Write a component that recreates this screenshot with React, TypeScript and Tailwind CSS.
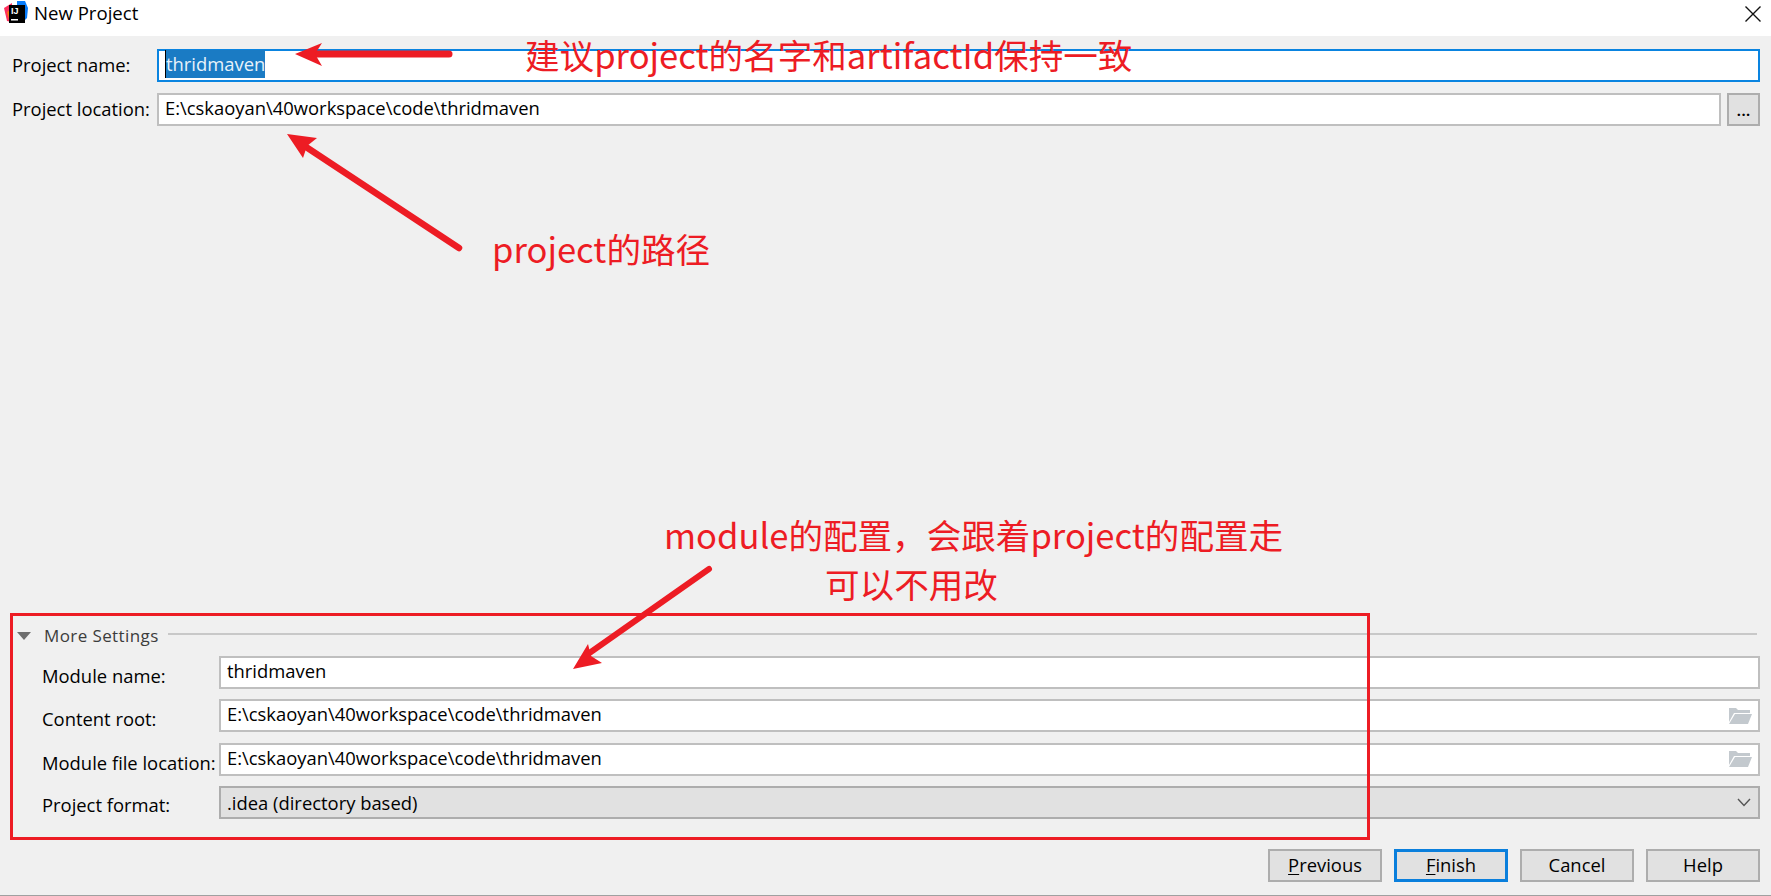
import type { ReactNode } from "react";

const uiFont = "font-['Open_Sans','Noto_Sans',sans-serif]";
const noteFont = "font-['Noto_Sans_CJK_SC',sans-serif]";

const path = "E:\\cskaoyan\\40workspace\\code\\thridmaven";

function IdeaLogo() {
  return (
    <svg width="26" height="26" viewBox="0 0 26 26" className="shrink-0">
      <path d="M1 8 L9 3 L9 22 L4 21 Z" fill="#fe315d" />
      <path d="M14 1 L22 1 L25 8 L24 18 L20 22 L14 22 Z" fill="#087cfa" />
      <path d="M4 12 L9 9 L9 20 L6 19 Z" fill="#f97a12" />
      <rect x="6" y="5" width="16" height="18" fill="#000" />
      <text x="8" y="14" fontSize="9" fontWeight="700" fill="#fff" fontFamily="Liberation Sans">
        IJ
      </text>
      <rect x="8" y="19" width="7" height="1.5" fill="#fff" />
    </svg>
  );
}

function FolderIcon() {
  return (
    <svg width="24" height="18" viewBox="0 0 24 18" className="mb-[-3px] shrink-0">
      <path d="M1 1 H8 L10 3 H22 V6 H6 L1 15 Z" fill="#c3c9ce" />
      <path d="M7 7 H24 L20 17 H1 Z" fill="#c3c9ce" />
    </svg>
  );
}

function TextBox({ children, focused, className = "" }: { children: ReactNode; focused?: boolean; className?: string }) {
  return (
    <div
      className={`flex h-[33px] items-center border-2 bg-white pb-[3px] pl-[6px] pr-[6px] text-[18.4px] text-black ${
        focused ? "border-[#0a84e0]" : "border-[#bfbfbf]"
      } ${className}`}
    >
      {children}
    </div>
  );
}

function Button({ children, focused }: { children: ReactNode; focused?: boolean }) {
  return (
    <button
      type="button"
      className={`flex h-[33px] w-[114px] items-center justify-center bg-[#e1e1e1] pb-[2px] text-[18.4px] text-black ${
        focused ? "border-[3px] border-[#0a7fdc]" : "border-2 border-[#adadad]"
      }`}
    >
      {children}
    </button>
  );
}

function SettingRow({ label, leading, children }: { label: string; leading: string; children: ReactNode }) {
  return (
    <div className="flex h-[33px]">
      <span className={`h-[33px] w-[219px] shrink-0 whitespace-nowrap pl-[42px] text-[18.4px] text-black ${leading}`}>
        {label}
      </span>
      <div className="min-w-0 flex-1">{children}</div>
    </div>
  );
}

function Annotations() {
  return (
    <>
      <div className="pointer-events-none absolute left-[10px] top-[613px] h-[227px] w-[1360px] border-[3px] border-[#ed1c24]" />
      <svg width="1771" height="896" className="pointer-events-none absolute left-0 top-0">
        <g stroke="#ed1c24" strokeLinecap="round" fill="none">
          <path d="M312 54 L449 54" strokeWidth="7" />
          <path d="M300 143 L459 248" strokeWidth="6.5" />
          <path d="M588 654 L709 569" strokeWidth="6" />
        </g>
        <g fill="#ed1c24">
          <path d="M295 54 L322 43 L315 54 L322 66 Z" />
          <path d="M287 134 L317 138 L307 146 L303 158 Z" />
          <path d="M573 669 L588 644 L591 656 L602 663 Z" />
        </g>
      </svg>
      <div className={`${noteFont} pointer-events-none absolute inset-0 text-[34.6px] leading-[44px] text-[#ed1c24]`}>
        <span className="absolute left-[525px] top-[32px] whitespace-nowrap">建议project的名字和artifactId保持一致</span>
        <span className="absolute left-[492px] top-[226px] whitespace-nowrap">project的路径</span>
        <span className="absolute left-[664px] top-[512px] whitespace-nowrap">module的配置，会跟着project的配置走</span>
        <span className="absolute left-[825px] top-[561px] whitespace-nowrap">可以不用改</span>
      </div>
    </>
  );
}

export default function App() {
  return (
    <div className={`${uiFont} relative flex h-[896px] w-[1771px] flex-col overflow-hidden border-b border-[#a0a0a0] bg-[#f0f0f0]`}>
      <header className="flex h-9 items-start justify-between bg-white pl-[3px] pr-[9px]">
        <div className="flex items-center gap-[5px]">
          <IdeaLogo />
          <span className="text-[18.6px] leading-[24px] text-black">New Project</span>
        </div>
        <svg width="18" height="18" viewBox="0 0 18 18" className="mt-[5px]">
          <path d="M1.5 1.5 L16.5 16.5 M16.5 1.5 L1.5 16.5" stroke="#111" strokeWidth="1.4" />
        </svg>
      </header>

      <main className="flex flex-1 flex-col justify-between pb-[13px] pr-[11px] pt-[13px]">
        <section className="flex flex-col gap-[11px]">
          <div className="flex">
            <span className="w-[157px] shrink-0 pl-[12px] text-[18.4px] leading-[31px] text-black">Project name:</span>
            <TextBox focused className="flex-1">
              <span className="border-l border-black bg-[#1a7bc4] text-[#e8f2fa]">thridmaven</span>
            </TextBox>
          </div>
          <div className="flex gap-[6px]">
            <div className="flex min-w-0 flex-1">
              <span className="w-[157px] shrink-0 whitespace-nowrap pl-[12px] text-[18.4px] leading-[31px] text-black">
                Project location:
              </span>
              <TextBox className="flex-1">{path}</TextBox>
            </div>
            <button
              type="button"
              className="h-[33px] w-[33px] border-2 border-[#adadad] bg-[#e1e1e1] text-[17px] font-semibold leading-[30px] text-black"
            >
              ...
            </button>
          </div>
        </section>

        <section>
          <div className="flex items-center pb-[6px] pl-[17px] pr-[3px]">
            <svg width="14" height="8" viewBox="0 0 14 8" className="shrink-0">
              <path d="M0 0 H14 L7 8 Z" fill="#6e6e6e" />
            </svg>
            <span className="ml-[13px] text-[17px] leading-[28px] tracking-[0.4px] text-[#3c3c3c]">More Settings</span>
            <div className="ml-[9px] mt-[-3px] h-[2px] flex-1 bg-[#c8c8c8]" />
          </div>
          <div className="flex flex-col gap-[10.5px]">
            <SettingRow label="Module name:" leading="leading-[39px]">
              <TextBox>thridmaven</TextBox>
            </SettingRow>
            <SettingRow label="Content root:" leading="leading-[40px]">
              <TextBox className="justify-between">
                {path}
                <FolderIcon />
              </TextBox>
            </SettingRow>
            <SettingRow label="Module file location:" leading="leading-[40px]">
              <TextBox className="justify-between">
                {path}
                <FolderIcon />
              </TextBox>
            </SettingRow>
            <SettingRow label="Project format:" leading="leading-[37px]">
              <div className="flex h-[33px] items-center justify-between border-2 border-[#adadad] bg-[#e1e1e1] pl-[6px] pr-[7px] text-[18.4px] text-black">
                .idea (directory based)
                <svg width="14" height="9" viewBox="0 0 14 9">
                  <path d="M1 1 L7 7.5 L13 1" stroke="#555" strokeWidth="1.4" fill="none" />
                </svg>
              </div>
            </SettingRow>
          </div>
          <div className="mt-[30px] flex justify-end gap-3">
            <Button>
              <span className="underline underline-offset-2">P</span>revious
            </Button>
            <Button focused>
              <span className="underline underline-offset-2">F</span>inish
            </Button>
            <Button>Cancel</Button>
            <Button>Help</Button>
          </div>
        </section>
      </main>

      <Annotations />
    </div>
  );
}
